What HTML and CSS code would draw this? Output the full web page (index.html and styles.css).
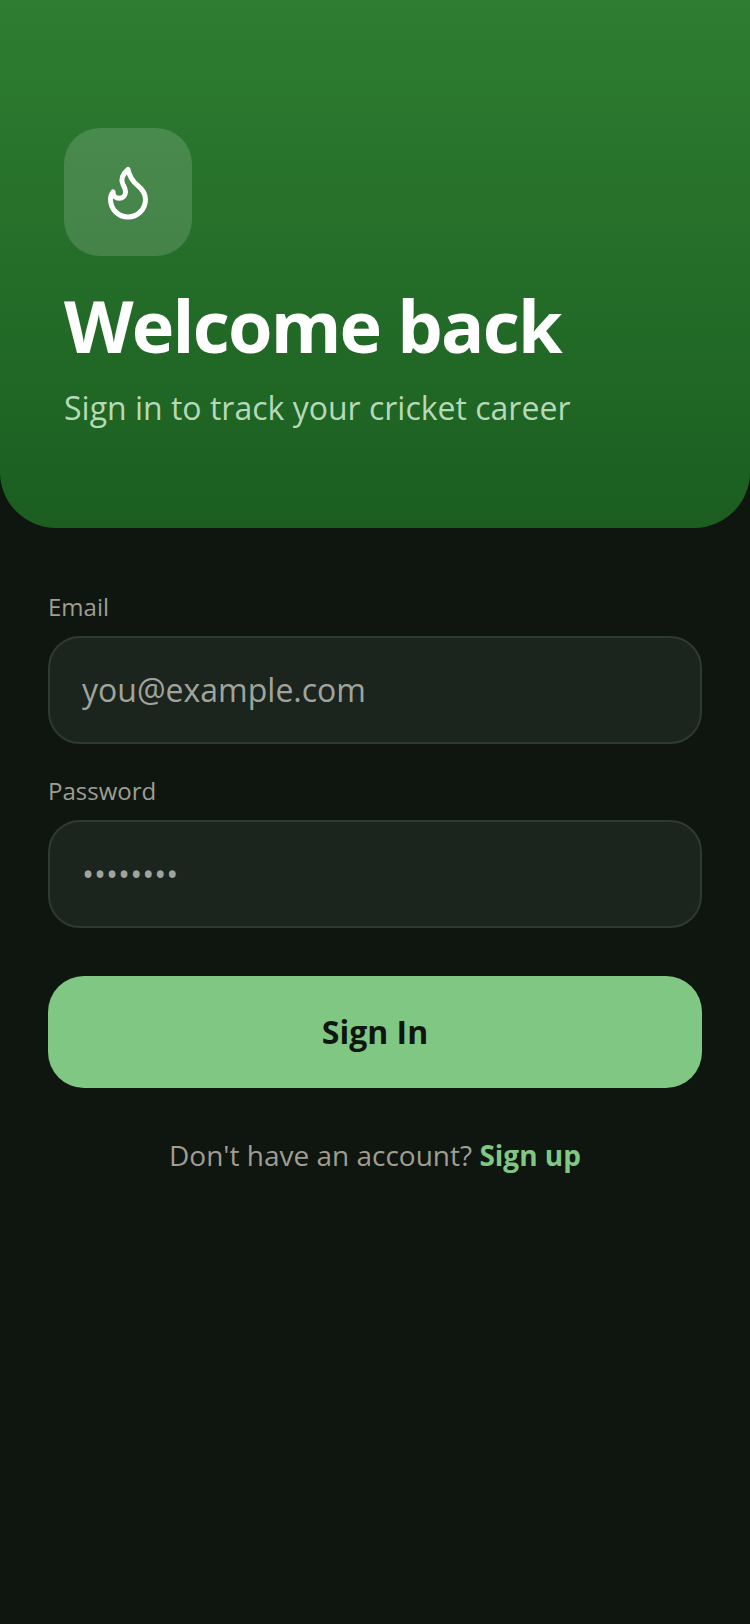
FILE: index.html
```html
<!DOCTYPE html>
<html lang="en">
<head>
  <meta charset="utf-8" />
  <meta name="viewport" content="width=device-width, initial-scale=1" />
  <title>Sign in</title>

  <link rel="stylesheet" href="styles.css">
</head>

<body>
  <header class="hero">
    <div class="hero-icon">
      <svg width="60" height="60" viewBox="0 0 24 24" fill="none" stroke="#fff" stroke-width="2" stroke-linecap="round" stroke-linejoin="round">
        <path d="M8.5 14.5A2.5 2.5 0 0 0 11 12c0-1.38-.5-2-1-3-1.072-2.143-.224-4.054 2-6 .5 2.5 2 4.9 4 6.5 2 1.6 3 3.5 3 5.5a7 7 0 1 1-14 0c0-1.153.433-2.294 1-3a2.5 2.5 0 0 0 2.5 2.5z"/>
      </svg>
    </div>
    <h1 class="hero-title">Welcome back</h1>
    <p class="hero-sub">Sign in to track your cricket career</p>
  </header>

  <form class="form">
    <label class="field-label" for="email">Email</label>
    <input class="field" id="email" type="email" placeholder="you@example.com">

    <label class="field-label" for="password">Password</label>
    <input class="field" id="password" type="password" placeholder="••••••••">

    <button class="submit" type="button">Sign In</button>

    <p class="switch">Don't have an account? <a class="switch-link" href="#">Sign up</a></p>
  </form>
</body>
</html>
```

FILE: styles.css
```css
* {
  box-sizing: border-box;
}

body {
  margin: 0;
  min-height: 1624px;
  background-color: #0f1610;
  font-family: "Open Sans", sans-serif;
}

.hero {
  height: 528px;
  padding: 128px 64px 0;
  background: linear-gradient(180deg, #2e7d32, #1b5e20);
  border-radius: 0 0 56px 56px;
}

.hero-icon {
  width: 128px;
  height: 128px;
  display: flex;
  justify-content: center;
  align-items: center;
  background: rgba(255, 255, 255, 0.15);
  border-radius: 36px;
}

.hero-title {
  margin: 25px 0 0;
  font-size: 72px;
  line-height: 88px;
  font-weight: 700;
  letter-spacing: -1.8px;
  color: #fff;
}

.hero-sub {
  margin: 15px 0 0;
  font-size: 32px;
  line-height: 48px;
  color: #b6d9b8;
}

.form {
  display: flex;
  flex-direction: column;
  padding: 60px 48px 0;
}

.field-label {
  font-size: 24px;
  line-height: 38px;
  color: #9e9e93;
  margin-bottom: 10px;
}

.field {
  width: 100%;
  height: 108px;
  padding: 0 32px 2px;
  margin-bottom: 28px;
  background: #1c241e;
  border: 2px solid #2e3b31;
  border-radius: 32px;
  font-family: inherit;
  font-size: 32px;
  color: #e8e8e8;
  outline: none;
}

.field::placeholder {
  color: #a0a49c;
  opacity: 1;
}

.submit {
  height: 112px;
  margin-top: 20px;
  padding: 0 0 1px;
  background: #81c784;
  border: none;
  border-radius: 36px;
  font-family: inherit;
  font-size: 32px;
  font-weight: 700;
  color: #0f1610;
}

.switch {
  margin: 43px 0 0;
  text-align: center;
  font-size: 28px;
  line-height: 48px;
  color: #9e9e93;
}

.switch-link {
  font-weight: 700;
  color: #81c784;
  text-decoration: none;
}
```
